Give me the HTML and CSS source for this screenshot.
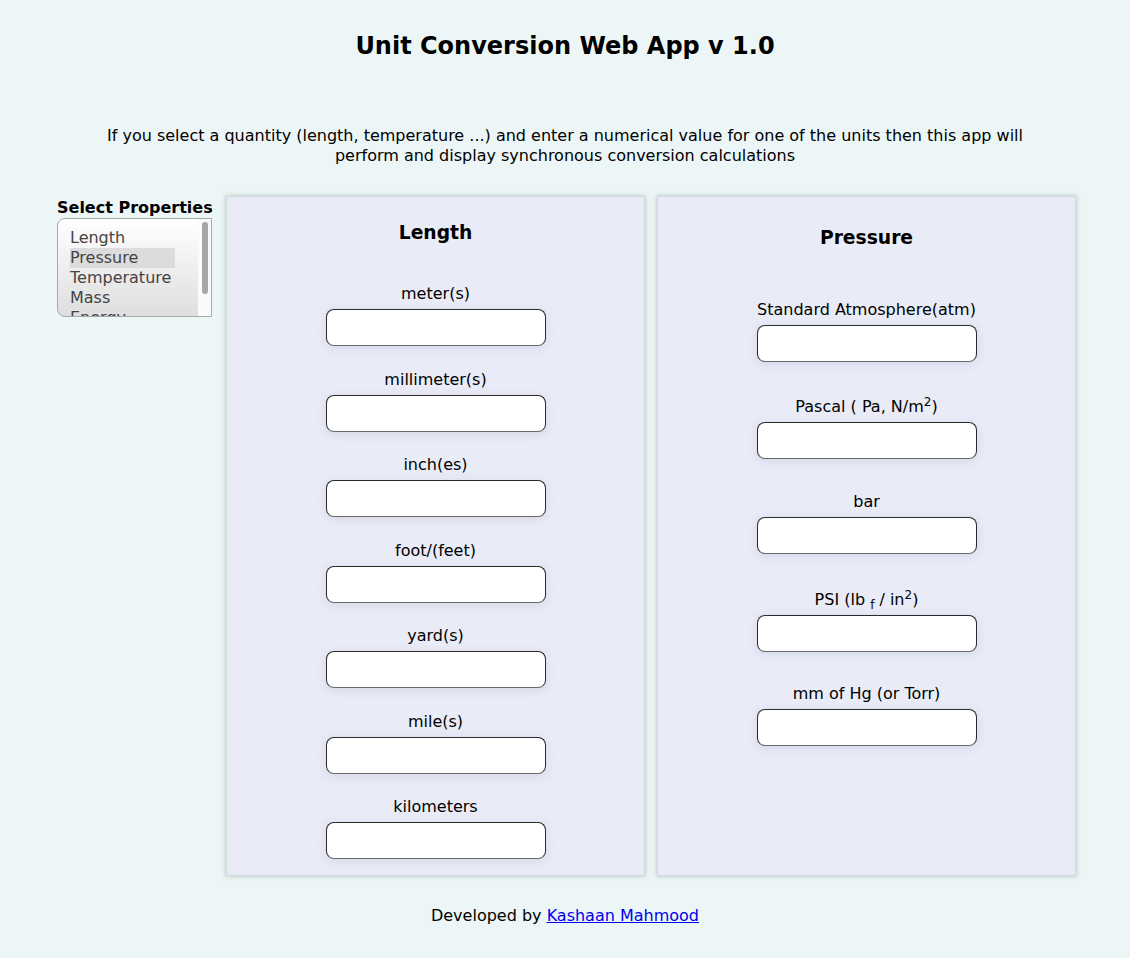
FILE: index.html
```html
<!DOCTYPE html>
<html lang="en">
<head>
<meta charset="utf-8">
<title>Unit Conversion Web App v 1.0</title>
<link rel="stylesheet" href="styles.css">
</head>
<body>
<h1 class="title">Unit Conversion Web App v 1.0</h1>
<p class="intro">If you select a quantity (length, temperature ...) and enter a numerical value for one of the units then this app will perform and display synchronous conversion calculations</p>
<main class="layout">
  <aside class="side">
    <div class="side-label">Select Properties</div>
    <div class="listbox">
      <ul class="options">
        <li class="option">Length</li>
        <li class="option selected">Pressure</li>
        <li class="option">Temperature</li>
        <li class="option">Mass</li>
        <li class="option">Energy</li>
      </ul>
      <div class="scrolltrack"><div class="scrollthumb"></div></div>
    </div>
  </aside>
  <section class="panel panel-length">
    <h3 class="panel-title">Length</h3>
    <div class="fields">
      <div class="field"><label class="field-label">meter(s)</label><input class="field-input" type="text"></div>
      <div class="field"><label class="field-label">millimeter(s)</label><input class="field-input" type="text"></div>
      <div class="field"><label class="field-label">inch(es)</label><input class="field-input" type="text"></div>
      <div class="field"><label class="field-label">foot/(feet)</label><input class="field-input" type="text"></div>
      <div class="field"><label class="field-label">yard(s)</label><input class="field-input" type="text"></div>
      <div class="field"><label class="field-label">mile(s)</label><input class="field-input" type="text"></div>
      <div class="field"><label class="field-label">kilometers</label><input class="field-input" type="text"></div>
    </div>
  </section>
  <section class="panel panel-pressure">
    <h3 class="panel-title">Pressure</h3>
    <div class="fields">
      <div class="field"><label class="field-label">Standard Atmosphere(atm)</label><input class="field-input" type="text"></div>
      <div class="field"><label class="field-label label-sup">Pascal ( Pa, N/m<sup>2</sup>)</label><input class="field-input" type="text"></div>
      <div class="field"><label class="field-label">bar</label><input class="field-input" type="text"></div>
      <div class="field"><label class="field-label label-subsup">PSI (lb <sub>f</sub> / in<sup>2</sup>)</label><input class="field-input" type="text"></div>
      <div class="field field-last"><label class="field-label">mm of Hg (or Torr)</label><input class="field-input" type="text"></div>
    </div>
  </section>
</main>
<footer class="footer">Developed by <a class="footer-link" href="#">Kashaan Mahmood</a></footer>
</body>
</html>
```

FILE: styles.css
```css
* { box-sizing: border-box; }

body {
  margin: 0;
  background: #edf6f6;
  font-family: "DejaVu Sans", "Liberation Sans", sans-serif;
  color: #000;
}

.title {
  margin: 0;
  padding-top: 32px;
  font-size: 24px;
  line-height: 28px;
  font-weight: bold;
  text-align: center;
}

.intro {
  max-width: 940px;
  margin: 66px auto 0;
  font-size: 16px;
  line-height: 20px;
  text-align: center;
}

.layout {
  display: flex;
  align-items: stretch;
  gap: 14px;
  margin-top: 31px;
  padding: 0 55px 0 57px;
}

.side {
  width: 155px;
  margin-right: 1px;
  padding-top: 2px;
  flex: none;
}

.side-label {
  font-size: 16px;
  font-weight: bold;
  line-height: 18px;
  margin-bottom: 1px;
  white-space: nowrap;
}

.listbox {
  position: relative;
  height: 99px;
  border: 1px solid #a9a9a9;
  border-radius: 8px 0 0 8px;
  background: linear-gradient(#ffffff, #dedede);
  overflow: hidden;
}

.options {
  list-style: none;
  margin: 0;
  padding: 9px 0 0 12px;
}

.option {
  width: 105px;
  font-size: 16px;
  line-height: 20px;
  color: #444;
  white-space: nowrap;
}

.option.selected {
  background: #dcdcdc;
}

.scrolltrack {
  position: absolute;
  top: 0;
  right: 0;
  bottom: 0;
  width: 13px;
  background: #fafafa;
}

.scrollthumb {
  margin: 3px 0 0 4px;
  width: 6px;
  height: 72px;
  border-radius: 3px;
  background: #a6a6a6;
}

.panel {
  width: 417px;
  flex: none;
  background: #e9ecf7;
  box-shadow: 0 0 4px 2px rgba(170, 190, 190, 0.6);
  text-align: center;
  padding-bottom: 16px;
}

.panel-length { padding-top: 25px; }
.panel-pressure { padding-top: 30px; }

.panel-title {
  margin: 0;
  font-size: 18.72px;
  line-height: 22px;
  font-weight: bold;
}

.fields {
  display: flex;
  flex-direction: column;
  align-items: center;
}

.panel-length .fields { margin-top: 41px; gap: 24.5px; }
.panel-pressure .fields { margin-top: 52px; gap: 34px; }

.field {
  display: flex;
  flex-direction: column;
  align-items: center;
}

.field-last { margin-top: -1px; }

.field-label {
  font-size: 16px;
  line-height: 18px;
  margin-bottom: 6px;
}

.label-sup { padding-top: 2px; }
.label-subsup { padding-top: 3px; }

.field-label sup,
.field-label sub {
  font-size: 12px;
  line-height: 0;
}

.field-input {
  width: 220px;
  height: 37px;
  margin: 0;
  border: 1px solid #2a2a2a;
  border-bottom-color: #6a6a6a;
  border-radius: 8px;
  background: #fff;
  box-shadow: 0 2px 10px rgba(120, 120, 160, 0.2);
  font: inherit;
  padding: 0 8px;
}

.footer {
  margin-top: 31px;
  font-size: 16px;
  line-height: 20px;
  text-align: center;
  padding-bottom: 20px;
}

.footer-link {
  color: #0000ee;
}
```
